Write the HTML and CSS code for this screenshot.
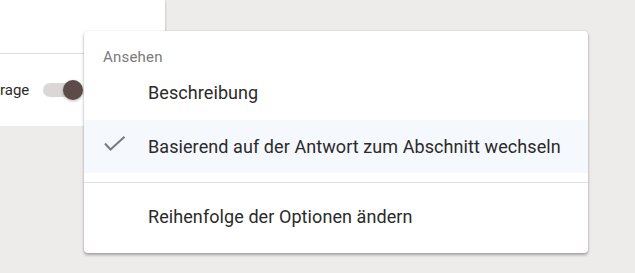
FILE: index.html
```html
<!DOCTYPE html>
<html>
<head>
    <meta charset="UTF-8">
    <title>Abschnitt Menü</title>
    <link rel="stylesheet" href="styles.css">
</head>

<body>
    <div class="card">
        <div class="card_top"></div>
        <div class="card_row">
            <span class="label">rage</span>
            <div class="toggle">
                <div class="thumb"></div>
            </div>
        </div>
    </div>

    <div class="menu">
        <div class="menu_label">Ansehen</div>
        <div class="item item_first">
            <span class="icon"></span>
            <span class="text">Beschreibung</span>
        </div>
        <div class="item item_active">
            <span class="icon">
                <svg width="24" height="24" viewBox="0 0 24 24">
                    <polyline points="1,8.5 6.5,14.5 20.5,1.8" fill="none" stroke="#7b7b7b" stroke-width="2"/>
                </svg>
            </span>
            <span class="text">Basierend auf der Antwort zum Abschnitt wechseln</span>
        </div>
        <div class="sep"></div>
        <div class="item item_last">
            <span class="icon"></span>
            <span class="text">Reihenfolge der Optionen ändern</span>
        </div>
    </div>
</body>

</html>
```

FILE: styles.css
```css
*{margin: 0;padding: 0;box-sizing: border-box;}
body{
    background: #eeebeb;
    font-family: Roboto, "Liberation Sans", sans-serif;
    color: #2a2a2a;
    overflow: hidden;
}
.card{
    width: 165px;
    height: 126px;
    background: #fff;
    box-shadow: 0 1px 2px rgba(0,0,0,.35);
    overflow: hidden;
}
.card_top{
    height: 54px;
    border-bottom: 1px solid #e0e0e0;
}
.card_row{
    height: 72px;
    display: flex;
    align-items: center;
}
.label{
    flex-shrink: 0;
    white-space: nowrap;
    font-size: 15px;
    margin-right: 14px;
}
.toggle{
    position: relative;
    flex-shrink: 0;
    width: 34px;
    height: 14px;
    border-radius: 7px;
    background: #dcd7d7;
}
.thumb{
    position: absolute;
    left: 20px;
    top: -3px;
    width: 20px;
    height: 20px;
    border-radius: 50%;
    background: #5d4b4a;
    box-shadow: 0 1px 3px rgba(0,0,0,.3);
}
.menu{
    position: absolute;
    left: 84px;
    top: 31px;
    width: 504px;
    height: 222px;
    background: #fff;
    border-radius: 4px;
    box-shadow: 0 2px 3px rgba(0,0,0,.3), 0 0 2px rgba(0,0,0,.12);
    padding-top: 8px;
}
.menu_label{
    height: 36px;
    line-height: 36px;
    padding-left: 19px;
    font-size: 15px;
    letter-spacing: 0.2px;
    color: #7a7a7a;
}
.item{
    display: flex;
    align-items: center;
    padding-left: 20px;
    font-size: 18px;
    letter-spacing: 0.08px;
}
.item_first{
    height: 34px;
    margin-bottom: 11px;
}
.item_active{
    height: 53px;
    background: #f5f8fd;
}
.item_last{
    height: 66px;
}
.icon{
    display: flex;
    width: 24px;
    height: 24px;
    margin-right: 20px;
    margin-top: 1px;
}
.sep{
    height: 1px;
    margin-top: 9px;
    background: #e0e0e0;
}
```
